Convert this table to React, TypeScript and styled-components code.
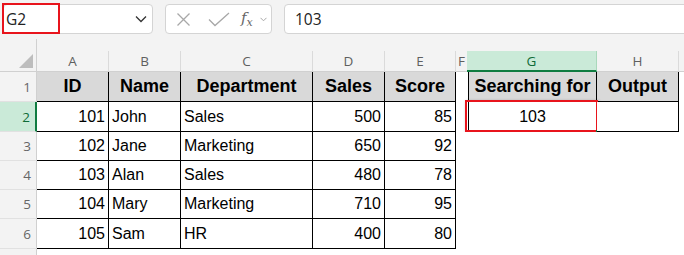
import React from "react";
import styled, { createGlobalStyle, css } from "styled-components";

const GlobalStyle = createGlobalStyle`
  body {
    margin: 0;
    background: #f3f3f3;
    font-family: "Liberation Sans", Arial, sans-serif;
    overflow: hidden;
  }
`;

type Align = "left" | "right" | "center";

type CellData = {
  text?: string;
  align?: Align;
  head?: boolean;
  boxed?: boolean;
  leftEdge?: boolean;
  selected?: boolean;
};

const colLetters = ["A", "B", "C", "D", "E", "F", "G", "H", ""];

const table = [
  ["ID", "Name", "Department", "Sales", "Score"],
  ["101", "John", "Sales", "500", "85"],
  ["102", "Jane", "Marketing", "650", "92"],
  ["103", "Alan", "Sales", "480", "78"],
  ["104", "Mary", "Marketing", "710", "95"],
  ["105", "Sam", "HR", "400", "80"],
];

// last row is only partly visible at the bottom edge
const rowHeights = [30, 30, 29, 29, 29, 30, 20];

const isNum = (s: string) => /^\d+$/.test(s);

function buildRow(i: number): CellData[] {
  const cells: CellData[] = [];
  const src = table[i];
  if (src) {
    src.forEach((t) => {
      cells.push({
        text: t,
        head: i === 0,
        boxed: true,
        align: i === 0 ? "center" : isNum(t) ? "right" : "left",
      });
    });
  } else {
    for (let k = 0; k < 5; k++) cells.push({});
  }
  // F
  cells.push({});
  // G, H
  if (i === 0) {
    cells.push({ text: "Searching for", head: true, boxed: true, leftEdge: true, align: "center" });
    cells.push({ text: "Output", head: true, boxed: true, align: "center" });
  } else if (i === 1) {
    cells.push({ text: "103", boxed: true, leftEdge: true, align: "center", selected: true });
    cells.push({ boxed: true });
  } else {
    cells.push({});
    cells.push({});
  }
  // I
  cells.push({});
  return cells;
}

const App = () => {
  return (
    <>
      <GlobalStyle />
      <Page>
        <FormulaBar>
          <NameBox>
            <NameText>G2</NameText>
            <svg width="12" height="8" viewBox="0 0 12 8">
              <polyline points="1,1.5 6,6.5 11,1.5" fill="none" stroke="#333" strokeWidth="1.3" />
            </svg>
            <RedMark />
          </NameBox>
          <FxBox>
            <svg width="15" height="15" viewBox="0 0 15 15">
              <path d="M1.5 1.5 L13.5 13.5 M13.5 1.5 L1.5 13.5" stroke="#a8a8a8" strokeWidth="1.3" fill="none" />
            </svg>
            <CheckIcon width="22" height="15" viewBox="0 0 22 15">
              <polyline points="1,7.5 7,13.5 21,1" stroke="#a8a8a8" strokeWidth="1.3" fill="none" />
            </CheckIcon>
            <FxLabel>
              f<sub>x</sub>
            </FxLabel>
            <FxChevron width="7" height="5" viewBox="0 0 7 5">
              <polyline points="0.5,0.8 3.5,3.8 6.5,0.8" fill="none" stroke="#a8a8a8" strokeWidth="1" />
            </FxChevron>
          </FxBox>
          <FormulaInput>103</FormulaInput>
        </FormulaBar>

        <Sheet>
          <Corner>
            <svg width="14" height="14" viewBox="0 0 14 14">
              <polygon points="14,0 14,14 0,14" fill="#bdbdbd" />
            </svg>
          </Corner>
          {colLetters.map((l, idx) => (
            <ColHead key={idx}>
              <ColLabel $active={l === "G"} $open={l === ""}>
                {l}
              </ColLabel>
            </ColHead>
          ))}

          {rowHeights.map((h, i) => (
            <React.Fragment key={i}>
              <RowHead $active={i === 1}>{i < 6 ? i + 1 : ""}</RowHead>
              {buildRow(i).map((c, j) => (
                <Cell
                  key={j}
                  $align={c.align || "left"}
                  $head={!!c.head}
                  $boxed={!!c.boxed}
                  $leftEdge={!!c.leftEdge}
                >
                  {c.text}
                  {c.selected && (
                    <>
                      <SelectMark />
                      <FillHandle />
                    </>
                  )}
                </Cell>
              ))}
            </React.Fragment>
          ))}
        </Sheet>
      </Page>
    </>
  );
};

export default App;

const Page = styled.div`
  width: 684px;
  height: 255px;
  overflow: hidden;
  background: #f3f3f3;
`;

const FormulaBar = styled.div`
  height: 39px;
  box-sizing: border-box;
  padding: 4px 0 0 3px;
  display: flex;
  align-items: flex-start;
  gap: 12px;
`;

const boxBase = css`
  height: 30px;
  box-sizing: border-box;
  background: #fff;
  border: 1px solid #d4d4d4;
  border-radius: 4px;
  display: flex;
  align-items: center;
`;

const NameBox = styled.div`
  ${boxBase};
  position: relative;
  width: 150px;
  padding: 0 5px 0 2px;
  justify-content: space-between;
`;

const NameText = styled.span`
  font-family: "Open Sans", "Liberation Sans", sans-serif;
  font-size: 15.5px;
  color: #222;
`;

const RedMark = styled.div`
  position: absolute;
  left: -2px;
  top: -2px;
  width: 58px;
  height: 31px;
  box-sizing: border-box;
  border: 2px solid #e8141c;
`;

const FxBox = styled.div`
  ${boxBase};
  width: 107px;
  padding: 0 0 0 10px;
`;

const CheckIcon = styled.svg`
  margin-left: 17px;
`;

const FxLabel = styled.span`
  font-family: "DejaVu Serif", "Liberation Serif", serif;
  font-style: italic;
  font-size: 15px;
  color: #666;
  margin-left: 11px;
  sub {
    font-size: 11px;
    vertical-align: -3px;
  }
`;

const FxChevron = styled.svg`
  margin-left: 7px;
`;

const FormulaInput = styled.div`
  ${boxBase};
  flex: 1;
  margin-right: -6px;
  padding-left: 10px;
  font-family: "Open Sans", "Liberation Sans", sans-serif;
  font-size: 15.5px;
  color: #222;
`;

const Sheet = styled.div`
  display: grid;
  grid-template-columns: 37px 72px 72px 132px 72px 71px 12px 129px 82px 1fr;
  grid-template-rows: 33px ${rowHeights.map((h) => `${h}px`).join(" ")};
`;

const Corner = styled.div`
  box-sizing: border-box;
  border-right: 1px solid #d0d0d0;
  border-bottom: 1px solid #d0d0d0;
  display: flex;
  align-items: flex-end;
  justify-content: flex-end;
  padding: 0 3px 3px 0;
`;

const ColHead = styled.div`
  display: flex;
  align-items: flex-end;
`;

const ColLabel = styled.div<{ $active: boolean; $open: boolean }>`
  flex: 1;
  height: 21px;
  box-sizing: border-box;
  display: flex;
  align-items: center;
  justify-content: center;
  font-family: "Open Sans", "Liberation Sans", sans-serif;
  font-size: 13.5px;
  color: #5f5f5f;
  border-right: ${(p) => (p.$open ? "none" : "1px solid #dadada")};
  border-bottom: 1px solid #d0d0d0;
  ${(p) =>
    p.$active &&
    css`
      background: #caead8;
      color: #0e6b37;
      border-right-color: #a9d8bb;
      border-bottom: 2px solid #107c41;
      margin-left: -1px;
      padding-top: 1px;
    `}
`;

const RowHead = styled.div<{ $active: boolean }>`
  box-sizing: border-box;
  background: #f3f3f3;
  border-right: 1px solid #d0d0d0;
  border-bottom: 1px solid #e1e1e1;
  display: flex;
  align-items: center;
  justify-content: flex-end;
  padding-right: 5px;
  font-family: "Open Sans", "Liberation Sans", sans-serif;
  font-size: 13.5px;
  color: #666;
  ${(p) =>
    p.$active &&
    css`
      background: #caead8;
      color: #0e6b37;
      border-right: 2px solid #107c41;
    `}
`;

const Cell = styled.div<{ $align: Align; $head: boolean; $boxed: boolean; $leftEdge: boolean }>`
  position: relative;
  box-sizing: border-box;
  background: ${(p) => (p.$head ? "#d9d9d9" : "#fff")};
  display: flex;
  align-items: center;
  justify-content: ${(p) =>
    p.$align === "right" ? "flex-end" : p.$align === "center" ? "center" : "flex-start"};
  padding: 0 3px;
  white-space: nowrap;
  font-size: ${(p) => (p.$head ? "18px" : "16px")};
  font-weight: ${(p) => (p.$head ? 700 : 400)};
  color: #000;
  ${(p) =>
    p.$boxed &&
    css`
      border-right: 1px solid #000;
      border-bottom: 1px solid #000;
    `}
  ${(p) =>
    p.$leftEdge &&
    css`
      border-left: 1px solid #000;
    `}
`;

const SelectMark = styled.div`
  position: absolute;
  left: -4px;
  top: -2px;
  right: -2px;
  bottom: -1px;
  border: 2px solid #e8141c;
  box-shadow: 1px 1px 3px rgba(0, 0, 0, 0.3);
`;

const FillHandle = styled.div`
  position: absolute;
  right: -4px;
  bottom: -3px;
  width: 4px;
  height: 4px;
  background: #107c41;
`;
